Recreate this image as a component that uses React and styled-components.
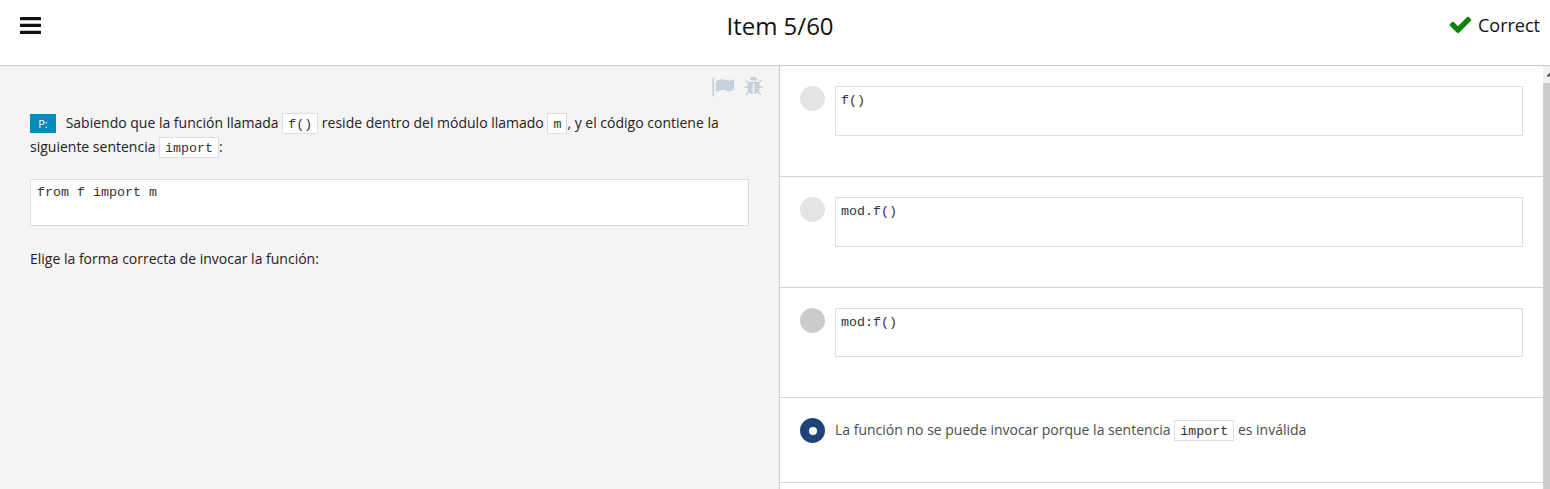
import React from "react";
import styled, { createGlobalStyle } from "styled-components";

const GlobalStyle = createGlobalStyle`
  * { box-sizing: border-box; }
  html, body { margin: 0; height: 100%; overflow: hidden; background: #fff; }
  body { font-family: "Open Sans", sans-serif; font-size: 14px; color: #222; }
`;

const Page = styled.div`
  display: flex;
  flex-direction: column;
  height: 100vh;
`;

const Header = styled.header`
  display: grid;
  grid-template-columns: 1fr auto 1fr;
  height: 66px;
  flex: none;
  padding: 0 10px 0 20px;
  border-bottom: 1px solid #ccc;
  color: #111;
`;

const MenuButton = styled.button`
  width: 21px;
  height: 18px;
  margin: 17px 0 0;
  padding: 0;
  border: 0;
  background: none;
  display: block;
  svg { display: block; }
`;

const Title = styled.h1`
  margin: 9px 0 0;
  font-size: 24px;
  font-weight: 400;
  line-height: 34px;
`;

const Verdict = styled.div`
  display: flex;
  justify-content: flex-end;
  gap: 5px;
  font-size: 18px;
  line-height: 26px;
  padding-top: 12px;
`;

const Body = styled.main`
  display: flex;
  flex: 1;
  min-height: 0;
`;

const Question = styled.section`
  width: 780px;
  flex: none;
  padding: 10px 30px 0;
  background: #f4f4f4;
  border-right: 1px solid #ccc;
  line-height: 24px;
`;

const Tools = styled.div`
  display: flex;
  justify-content: flex-end;
  gap: 9px;
  height: 24px;
  margin-right: -15px;
  color: #c8cfdc;
`;

const Paragraph = styled.p`
  margin: ${(p) => p.$top || 0}px 0 0;
`;

const Tag = styled.span`
  display: inline-block;
  width: 26px;
  height: 19px;
  margin-right: 6px;
  background: #008cba;
  color: #fff;
  font-size: 11px;
  line-height: 20px;
  text-align: center;
  vertical-align: 0;
`;

const Code = styled.code`
  display: inline-block;
  height: 21px;
  padding: 0 5px;
  border: 1px solid #ddd;
  background: #fff;
  color: #333;
  font: 13.33px/21px "Liberation Mono", monospace;
  vertical-align: 0;
`;

const CodeBlock = styled.pre`
  height: ${(p) => p.$height}px;
  margin: ${(p) => p.$top || 0}px 0 0;
  padding: ${(p) => p.$pad || "6px 5px"};
  border: 1px solid #ddd;
  background: #fff;
  color: #333;
  font: 13.33px/16px "Liberation Mono", monospace;
`;

const Answers = styled.section`
  flex: 1;
  min-width: 0;
`;

const Answer = styled.div`
  display: flex;
  gap: 10px;
  height: ${(p) => p.$height}px;
  padding: 20px 20px 0;
  border-bottom: 1px solid #d3d3d3;
  color: #4c4c4c;
  > :last-child { flex: 1; }
`;

const Radio = styled.span`
  display: flex;
  align-items: center;
  justify-content: center;
  width: 25px;
  height: 25px;
  flex: none;
  border-radius: 50%;
  background: ${(p) => p.$color};
`;

const Dot = styled.span`
  width: 8px;
  height: 8px;
  border-radius: 50%;
  background: #fff;
`;

const AnswerText = styled.div`
  line-height: 24px;
`;

const ScrollTrack = styled.div`
  width: 7px;
  flex: none;
  display: flex;
  flex-direction: column;
  overflow: hidden;
  background: #f1f1f1;
`;

const ScrollArrow = styled.div`
  height: 17px;
  flex: none;
  svg { display: block; }
`;

const ScrollThumb = styled.div`
  flex: 1;
  background: #cdcdcd;
`;

const Icon = ({ path, size, color = "currentColor" }) => (
  <svg width={size} height={size} viewBox="0 0 1792 1792" fill={color}>
    <path d={path} />
  </svg>
);

const CHECK =
  "M1671 566q0 40-28 68l-724 724-136 136q-28 28-68 28t-68-28l-136-136-362-362q-28-28-28-68t28-68l136-136q28-28 68-28t68 28l294 295 656-657q28-28 68-28t68 28l136 136q28 28 28 68z";
const FLAG =
  "M175 190v1440q0 34-34 34h-74q-34 0-34-34v-1440q0-62 71-62t71 62zM1792 320v763q0 25-12.5 38.5t-39.5 27.5q-215 116-369 116-61 0-123.5-22t-108.5-48-115.5-48-142.5-22q-192 0-464 146-17 9-33 9-26 0-45-19t-19-45v-742q0-32 31-55 21-14 79-43 236-120 421-120 107 0 200 29t219 88q38 19 88 19 54 0 117.5-21t110-47 88-47 54.5-21q26 0 45 19t19 45z";
const BUG =
  "M1696 960q0 26-19 45t-45 19h-224q0 171-67 290l208 209q19 19 19 45t-19 45q-18 19-45 19t-45-19l-198-197q-5 5-15 13t-42 28.5-65 36.5-82 29-97 13v-896h-128v896q-51 0-101.5-13.5t-87-33-66-39-43.5-32.5l-15-14-183 207q-20 21-48 21-24 0-43-16-19-18-20.5-44.5t15.5-46.5l202-227q-58-114-58-274h-224q-26 0-45-19t-19-45 19-45 45-19h224v-294l-173-173q-19-19-19-45t19-45 45-19 45 19l173 173h844l173-173q19-19 45-19t45 19 19 45-19 45l-173 173v294h224q26 0 45 19t19 45zm-480-576h-640q0-133 93.5-226.5t226.5-93.5 226.5 93.5 93.5 226.5z";

export default function App() {
  return (
    <Page>
      <GlobalStyle />
      <Header>
        <MenuButton aria-label="Menu">
          <svg width="21" height="18" fill="#111">
            <rect y="0" width="21" height="3.3" rx="0.6" />
            <rect y="6.8" width="21" height="3.3" rx="0.6" />
            <rect y="13.7" width="21" height="3.3" rx="0.6" />
          </svg>
        </MenuButton>
        <Title>Item 5/60</Title>
        <Verdict>
          <Icon path={CHECK} size={25} color="#0a840a" />
          Correct
        </Verdict>
      </Header>
      <Body>
        <Question>
          <Tools>
            <Icon path={FLAG} size={22} />
            <Icon path={BUG} size={21} />
          </Tools>
          <Paragraph $top={11}>
            <Tag>P:</Tag> Sabiendo que la función llamada <Code>f()</Code> reside dentro del módulo
            llamado <Code>m</Code>, y el código contiene la siguiente sentencia <Code>import</Code>:
          </Paragraph>
          <CodeBlock $height={47} $top={20} $pad="5px 6px">from f import m</CodeBlock>
          <Paragraph $top={21}>Elige la forma correcta de invocar la función:</Paragraph>
        </Question>
        <Answers>
          <Answer $height={111}>
            <Radio $color="#e4e4e4" />
            <CodeBlock $height={50}>f()</CodeBlock>
          </Answer>
          <Answer $height={111}>
            <Radio $color="#e4e4e4" />
            <CodeBlock $height={50}>mod.f()</CodeBlock>
          </Answer>
          <Answer $height={110}>
            <Radio $color="#cbcbcb" />
            <CodeBlock $height={49}>mod:f()</CodeBlock>
          </Answer>
          <Answer $height={85}>
            <Radio $color="#1f4377">
              <Dot />
            </Radio>
            <AnswerText>
              La función no se puede invocar porque la sentencia <Code>import</Code> es inválida
            </AnswerText>
          </Answer>
        </Answers>
        <ScrollTrack>
          <ScrollArrow>
            <svg width="17" height="17" fill="none" stroke="#505050" strokeWidth="2">
              <path d="M4.5 10.5L8.5 6.5L12.5 10.5" />
            </svg>
          </ScrollArrow>
          <ScrollThumb />
        </ScrollTrack>
      </Body>
    </Page>
  );
}
